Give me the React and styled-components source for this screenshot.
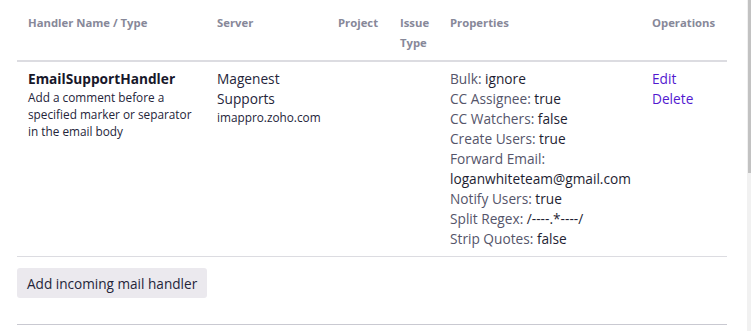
import React from 'react';
import styled, { createGlobalStyle } from 'styled-components';

const GlobalStyle = createGlobalStyle`
  html, body {
    margin: 0;
    padding: 0;
    background: #fff;
    font-family: "Open Sans", "Noto Sans", sans-serif;
    color: #25253a;
  }
  *, *::before, *::after {
    box-sizing: border-box;
  }
`;

const Page = styled.div`
  padding: 0 24px 0 17px;
`;

const Table = styled.table`
  width: 710px;
  border-collapse: collapse;
  table-layout: fixed;
`;

const Th = styled.th`
  width: ${p => p.w}px;
  text-align: left;
  vertical-align: top;
  padding: 13px 11px 7px;
  font-size: 11.3px;
  line-height: 20px;
  font-weight: 700;
  color: #878899;
  border-bottom: 2px solid #dcdce1;
`;

const Td = styled.td`
  vertical-align: top;
  padding: 7px 11px 7px;
  font-size: 13.7px;
  line-height: 20px;
  color: #25253a;
  border-bottom: 1px solid #dcdce1;
`;

const Name = styled.div`
  font-weight: 700;
  color: #17172a;
`;

const Small = styled.div`
  font-size: 11.8px;
  line-height: 17px;
  color: #25253a;
`;

const Prop = styled.div`
  white-space: nowrap;
  color: #55556a;
`;

const Value = styled.span`
  color: #1e1e32;
`;

const OpLink = styled.a`
  display: block;
  color: #5219d0;
  text-decoration: none;
  cursor: pointer;
`;

const Footer = styled.div`
  padding: 11px 0 26px;
  width: 710px;
  border-bottom: 1px solid #c9c9d1;
`;

const Button = styled.button`
  height: 30px;
  padding: 0 10px;
  border: none;
  border-radius: 3px;
  background: #ebe9ee;
  color: #25253a;
  font-family: inherit;
  font-size: 13.6px;
  cursor: pointer;
`;

const ScrollTrack = styled.div`
  position: fixed;
  top: 0;
  right: 0;
  width: 4px;
  height: 100%;
  background: #f1f1f1;
`;

const ScrollThumb = styled.div`
  width: 3px;
  margin-left: 1px;
  height: 173px;
  background: #c2c2c2;
`;

const props = [
  ['Bulk', 'ignore'],
  ['CC Assignee', 'true'],
  ['CC Watchers', 'false'],
  ['Create Users', 'true'],
  ['Forward Email', null],
  ['Notify Users', 'true'],
  ['Split Regex', '/----.*----/'],
  ['Strip Quotes', 'false'],
];

export default function App() {
  return (
    <Page>
      <GlobalStyle />
      <Table>
        <thead>
          <tr>
            <Th w={189}>Handler Name / Type</Th>
            <Th w={121}>Server</Th>
            <Th w={62}>Project</Th>
            <Th w={50}>Issue Type</Th>
            <Th w={202}>Properties</Th>
            <Th w={86}>Operations</Th>
          </tr>
        </thead>
        <tbody>
          <tr>
            <Td>
              <Name>EmailSupportHandler</Name>
              <Small>Add a comment before a specified marker or separator in the email body</Small>
            </Td>
            <Td>
              <div>Magenest Supports</div>
              <Small>imappro.zoho.com</Small>
            </Td>
            <Td />
            <Td />
            <Td>
              {props.map(([k, v]) =>
                v === null ? (
                  <React.Fragment key={k}>
                    <Prop>{k}:</Prop>
                    <Prop><Value>loganwhiteteam@gmail.com</Value></Prop>
                  </React.Fragment>
                ) : (
                  <Prop key={k}>{k}: <Value>{v}</Value></Prop>
                )
              )}
            </Td>
            <Td>
              <OpLink>Edit</OpLink>
              <OpLink>Delete</OpLink>
            </Td>
          </tr>
        </tbody>
      </Table>
      <Footer>
        <Button>Add incoming mail handler</Button>
      </Footer>
      <ScrollTrack>
        <ScrollThumb />
      </ScrollTrack>
    </Page>
  );
}
